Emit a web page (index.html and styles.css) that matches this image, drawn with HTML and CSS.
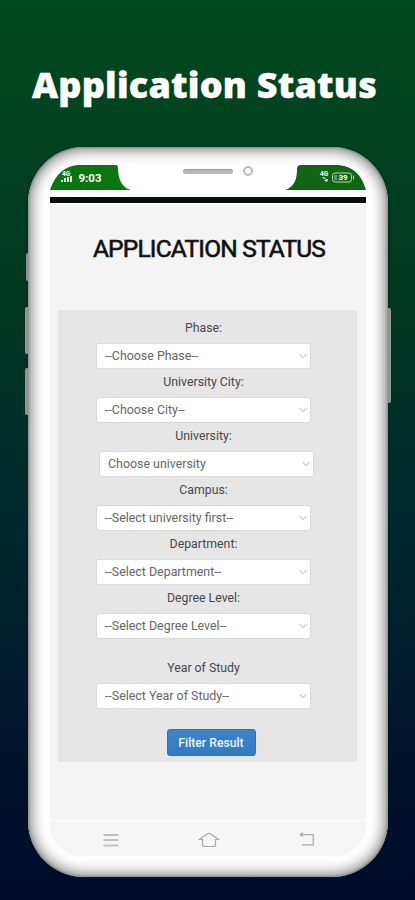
FILE: index.html
```html
<!DOCTYPE html>
<html lang="en">
<head>
<meta charset="utf-8">
<title>Application Status</title>
<link rel="stylesheet" href="styles.css">
</head>
<body>
<h1 class="title">Application Status</h1>
<main class="phone">
  <i class="key key-a"></i><i class="key key-b"></i><i class="key key-c"></i><i class="key key-d"></i>
  <div class="screen">
    <svg class="status" width="316" height="25" viewBox="0 0 316 25">
      <path fill="#0b750f" d="M0 25C5 10 14 1 28 0H66Q68 0 68 3C68 14 72 23 81 25Z"/>
      <path fill="#106614" d="M235 25C244 22 247 15 247 4Q247 0 251 0H288C303 1 312 10 316 25Z"/>
      <g fill="#fff">
        <text class="net" x="12" y="11">4G</text>
        <path opacity=".85" d="M11 15h2v2h-2zM14 13h2v4h-2zM17 12h2v5h-2zM20 11h2v6h-2z"/>
        <text class="clock" x="28.5" y="17">9:03</text>
        <text class="net" x="270" y="11">4G</text>
        <path d="M272 12l4 1-2 1zM274 15l4-1-1 3z"/>
        <text class="charge" x="288.500" y="15">39</text>
      </g>
      <rect x="282.500" y="8" width="19" height="9" rx="2.500" fill="none" stroke="#b9d4b9"/>
      <path d="M303.500 10.500v4" stroke="#b9d4b9"/>
      <path d="M284 10h3v5h-3z" fill="#b9d4b9" opacity=".5"/>
    </svg>
    <div class="speaker"></div><div class="camera"></div>
    <div class="rule"></div>
    <div class="page">
      <h2 class="heading">APPLICATION STATUS</h2>
      <form class="panel">
        <label class="label">Phase:</label>
        <div class="select"><span>--Choose Phase--</span><svg class="arrow" viewBox="0 0 8 6"><path d="M.7 1.200L4 4.600 7.300 1.200"/></svg></div>
        <label class="label">University City:</label>
        <div class="select"><span>--Choose City--</span><svg class="arrow" viewBox="0 0 8 6"><path d="M.7 1.200L4 4.600 7.300 1.200"/></svg></div>
        <label class="label">University:</label>
        <div class="select shifted"><span>Choose university</span><svg class="arrow" viewBox="0 0 8 6"><path d="M.7 1.200L4 4.600 7.300 1.200"/></svg></div>
        <label class="label">Campus:</label>
        <div class="select"><span>--Select university first--</span><svg class="arrow" viewBox="0 0 8 6"><path d="M.7 1.200L4 4.600 7.300 1.200"/></svg></div>
        <label class="label">Department:</label>
        <div class="select"><span>--Select Department--</span><svg class="arrow" viewBox="0 0 8 6"><path d="M.7 1.200L4 4.600 7.300 1.200"/></svg></div>
        <label class="label">Degree Level:</label>
        <div class="select"><span>--Select Degree Level--</span><svg class="arrow" viewBox="0 0 8 6"><path d="M.7 1.200L4 4.600 7.300 1.200"/></svg></div>
        <label class="label spaced">Year of Study</label>
        <div class="select"><span>--Select Year of Study--</span><svg class="arrow" viewBox="0 0 8 6"><path d="M.7 1.200L4 4.600 7.300 1.200"/></svg></div>
        <button class="submit" type="button">Filter Result</button>
      </form>
    </div>
    <nav class="nav">
      <svg width="16" height="16" viewBox="0 0 16 16"><path d="M.5 3h15M.5 8h15M.5 13.500h15" stroke="#c2c2c2" stroke-width="2.200"/></svg>
      <svg width="22" height="16" viewBox="0 0 22 16"><path d="M4.500 7.500H1.500L9.500 1.700Q11 .8 12.500 1.700L20.500 7.500H17.500V12.500Q17.500 14.500 15.500 14.500H6.500Q4.500 14.500 4.500 12.500Z"/></svg>
      <svg width="17" height="16" viewBox="0 0 17 16"><path d="M5 .8L2 2.700 5 4.600M2 2.700H15.300V12.800H4"/></svg>
    </nav>
  </div>
</main>
</body>
</html>
```
FILE: styles.css
```css
* { box-sizing: border-box; }
body {
  margin: 0;
  height: 900px;
  overflow: hidden;
  font-family: Roboto, sans-serif;
  background: linear-gradient(#004a20 0, #004421 100px, #003423 350px, #002a2c 500px, #00142c 750px, #000d2b 860px, #000b29 100%);
}
.title {
  margin: 0;
  height: 147px;
  padding: 60px 6px 0 0;
  font: 800 36px/50px "Open Sans", sans-serif;
  letter-spacing: .2px;
  text-align: center;
  white-space: nowrap;
  color: #fff;
  padding-right: 6px;
  -webkit-text-stroke: .4px #fff;
}
.phone {
  position: relative;
  width: 360px;
  height: 730px;
  margin-left: 28px;
  padding: 18px 22px 21px;
  border-radius: 56px;
  background: #fff;
  box-shadow: inset 0 0 3px #666, inset 0 0 13px 4px #8c8c8c, 0 0 3px #00281a;
}
.key {
  position: absolute;
  width: 3px;
  border-radius: 2px 0 0 2px;
  background: #8f9692;
}
.key-a { left: -2px; top: 106px; height: 28px; }
.key-b { left: -3px; top: 160px; height: 47px; }
.key-c { left: -3px; top: 221px; height: 47px; }
.key-d { right: -3px; top: 161px; height: 95px; border-radius: 0 2px 2px 0; }
.screen {
  position: relative;
  display: flex;
  flex-direction: column;
  height: 691px;
  border-radius: 20px 20px 31px 31px;
  overflow: hidden;
  background: #fff;
}
.status { display: block; flex: none; }
.net { font: 700 6.5px Roboto, sans-serif; }
.clock { font: 700 11.5px Roboto, sans-serif; }
.charge { font: 700 8px Roboto, sans-serif; }
.speaker {
  position: absolute;
  left: 133px;
  top: 4px;
  width: 50px;
  height: 5px;
  border-radius: 3px;
  background: #b9b9b9;
  border-top: 1px solid #999;
}
.camera {
  position: absolute;
  left: 193px;
  top: 1px;
  width: 10px;
  height: 10px;
  border: 2px solid #bbb;
  border-radius: 50%;
}
.rule { flex: none; height: 6px; margin-top: 7px; background: #0b0d0d; }
.page {
  height: 617px;
  padding: 26px 9px 0 8px;
  background: #f4f4f4;
  border-top: 1px solid #fff;
}
.heading {
  margin: 0;
  padding-left: 3px;
  height: 80px;
  font: 400 24.5px/38px Roboto, sans-serif;
  letter-spacing: -.8px;
  text-align: center;
  white-space: nowrap;
  color: #111;
  -webkit-text-stroke: .6px #111;
}
.panel {
  display: flex;
  flex-direction: column;
  height: 452px;
  padding: 5px 46px 0 38px;
  background: #e6e6e6;
}
.label {
  height: 28px;
  font-size: 12.3px;
  line-height: 27px;
  text-align: center;
  color: #484848;
}
.spaced { margin-top: 16px; }
.select {
  display: flex;
  align-items: center;
  justify-content: space-between;
  height: 26px;
  padding: 0 3px 0 8px;
  border: 1px solid #dadada;
  border-radius: 3px;
  background: #fff;
  font-size: 12.4px;
  white-space: nowrap;
  color: #666;
}
.select span { margin-top: -1px; }
.shifted { margin: 0 -3px 0 3px; }
.arrow { width: 8px; height: 6px; fill: none; stroke: #aaa; stroke-width: 1; }
.submit {
  align-self: center;
  width: 89px;
  height: 27px;
  margin: 20px 0 0 15px;
  padding: 0;
  border: 1px solid #3071b2;
  border-radius: 3px;
  background: linear-gradient(#3c85ca, #347ac0);
  font: 500 12.2px Roboto, sans-serif;
  color: #eef5ff;
}
.nav {
  display: flex;
  flex: 1;
  align-items: center;
  justify-content: space-between;
  padding: 3px 51px 0 53px;
  background: #f6f6f6;
  border-top: 1px solid #fff;
}
.nav svg { fill: none; stroke: #aaa; stroke-width: 1.2; }
```
